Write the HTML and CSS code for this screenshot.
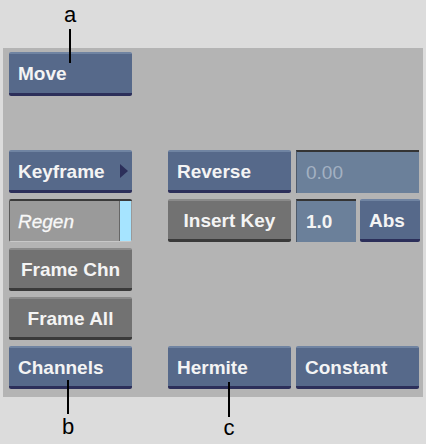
FILE: index.html
```html
<!DOCTYPE html>
<html>
<head>
<meta charset="utf-8">
<link rel="stylesheet" href="styles.css">
</head>
<body>
<div class="page">
  <div class="top"></div>
  <div class="panel">
    <div class="col left">
      <div class="btn blue move">Move</div>
      <div class="btn blue key">Keyframe<span class="tri"></span></div>
      <div class="field regen">Regen<span class="stripe"></span></div>
      <div class="btn gray center">Frame Chn</div>
      <div class="btn gray center">Frame All</div>
      <div class="btn blue">Channels</div>
    </div>
    <div class="col right">
      <div class="row">
        <div class="btn blue">Reverse</div>
        <div class="num wide dim">0.00</div>
      </div>
      <div class="row">
        <div class="btn gray center">Insert Key</div>
        <div class="num small">1.0</div>
        <div class="btn blue smallbtn">Abs</div>
      </div>
      <div class="row last">
        <div class="btn blue">Hermite</div>
        <div class="btn blue">Constant</div>
      </div>
    </div>
  </div>
  <div class="note na"><span class="lbl">a</span><span class="line"></span></div>
  <div class="note nb"><span class="line"></span><span class="lbl">b</span></div>
  <div class="note nc"><span class="line"></span><span class="lbl">c</span></div>
</div>
</body>
</html>
```
FILE: styles.css
```css
html, body {
  margin: 0;
  padding: 0;
  background: #dcdcdc;
}
.page {
  position: relative;
  width: 426px;
  height: 444px;
  font-family: "Liberation Sans", Arial, sans-serif;
}
.top {
  height: 48px;
}
.panel {
  margin-left: 3px;
  width: 420px;
  height: 349px;
  box-sizing: border-box;
  padding: 4px 0 0 6px;
  background: #b4b4b4;
  display: flex;
}
.col {
  display: flex;
  flex-direction: column;
  gap: 6px;
  width: 123px;
}
.right {
  margin-left: 36px;
  width: 252px;
  padding-top: 98px;
}
.row {
  display: flex;
  gap: 5px;
}
.row.last {
  margin-top: 98px;
}
.btn, .field, .num {
  position: relative;
  box-sizing: border-box;
  width: 123px;
  height: 43px;
  display: flex;
  align-items: center;
  padding-left: 9px;
  padding-top: 1px;
  color: #f4f4f4;
  font-size: 19px;
  font-weight: bold;
  border-radius: 2px;
  flex-shrink: 0;
}
.btn.blue {
  background: #56698a;
  border-top: 2px solid #7084a2;
  border-bottom: 3px solid #2c2f5a;
}
.btn.gray {
  background: #727272;
  border-top: 2px solid #8a8a8a;
  border-bottom: 3px solid #3a3a3a;
}
.center {
  justify-content: center;
  padding-left: 0;
}
.move {
  height: 44px;
  margin-bottom: 48px;
}
.key {
  padding-right: 20px;
}
.tri {
  position: absolute;
  right: 4px;
  top: 12px;
  width: 0;
  height: 0;
  border-top: 7px solid transparent;
  border-bottom: 7px solid transparent;
  border-left: 8px solid #2c2f5a;
}
.field.regen {
  background: #9a9a9a;
  border-top: 2px solid #3a3a3a;
  border-left: 1px solid #5a5a5a;
  border-bottom: 1px solid #c8c8c8;
  font-style: italic;
  font-weight: normal;
  font-size: 19px;
  padding-left: 8px;
  color: #f8f8f8;
  -webkit-text-stroke: 0.3px #f8f8f8;
}
.stripe {
  position: absolute;
  right: 1px;
  top: 0;
  bottom: 0;
  width: 11px;
  background: #a6e4ff;
  border-left: 1px solid #666;
}
.num {
  background: #6b809a;
  border-top: 2px solid #343434;
  border-left: 1px solid #4e5a6a;
  border-radius: 0;
}
.num.wide {
  width: 123px;
}
.num.dim {
  color: #a3b1c2;
  font-weight: normal;
  font-size: 19px;
}
.num.small {
  width: 60px;
}
.row .smallbtn {
  width: 60px;
  margin-left: -1px;
}
.note {
  position: absolute;
  display: flex;
  flex-direction: column;
  align-items: center;
  color: #000;
  font-size: 22px;
  line-height: 1;
}
.note .line {
  width: 2px;
  background: #000;
}
.na {
  left: 58px;
  top: 4px;
  width: 24px;
}
.na .line {
  height: 34px;
  margin-top: 3px;
}
.nb {
  left: 56px;
  top: 380px;
  width: 24px;
}
.nb .line {
  height: 34px;
  margin-bottom: 2px;
}
.nc {
  left: 217px;
  top: 382px;
  width: 24px;
}
.nc .line {
  height: 35px;
}
```
